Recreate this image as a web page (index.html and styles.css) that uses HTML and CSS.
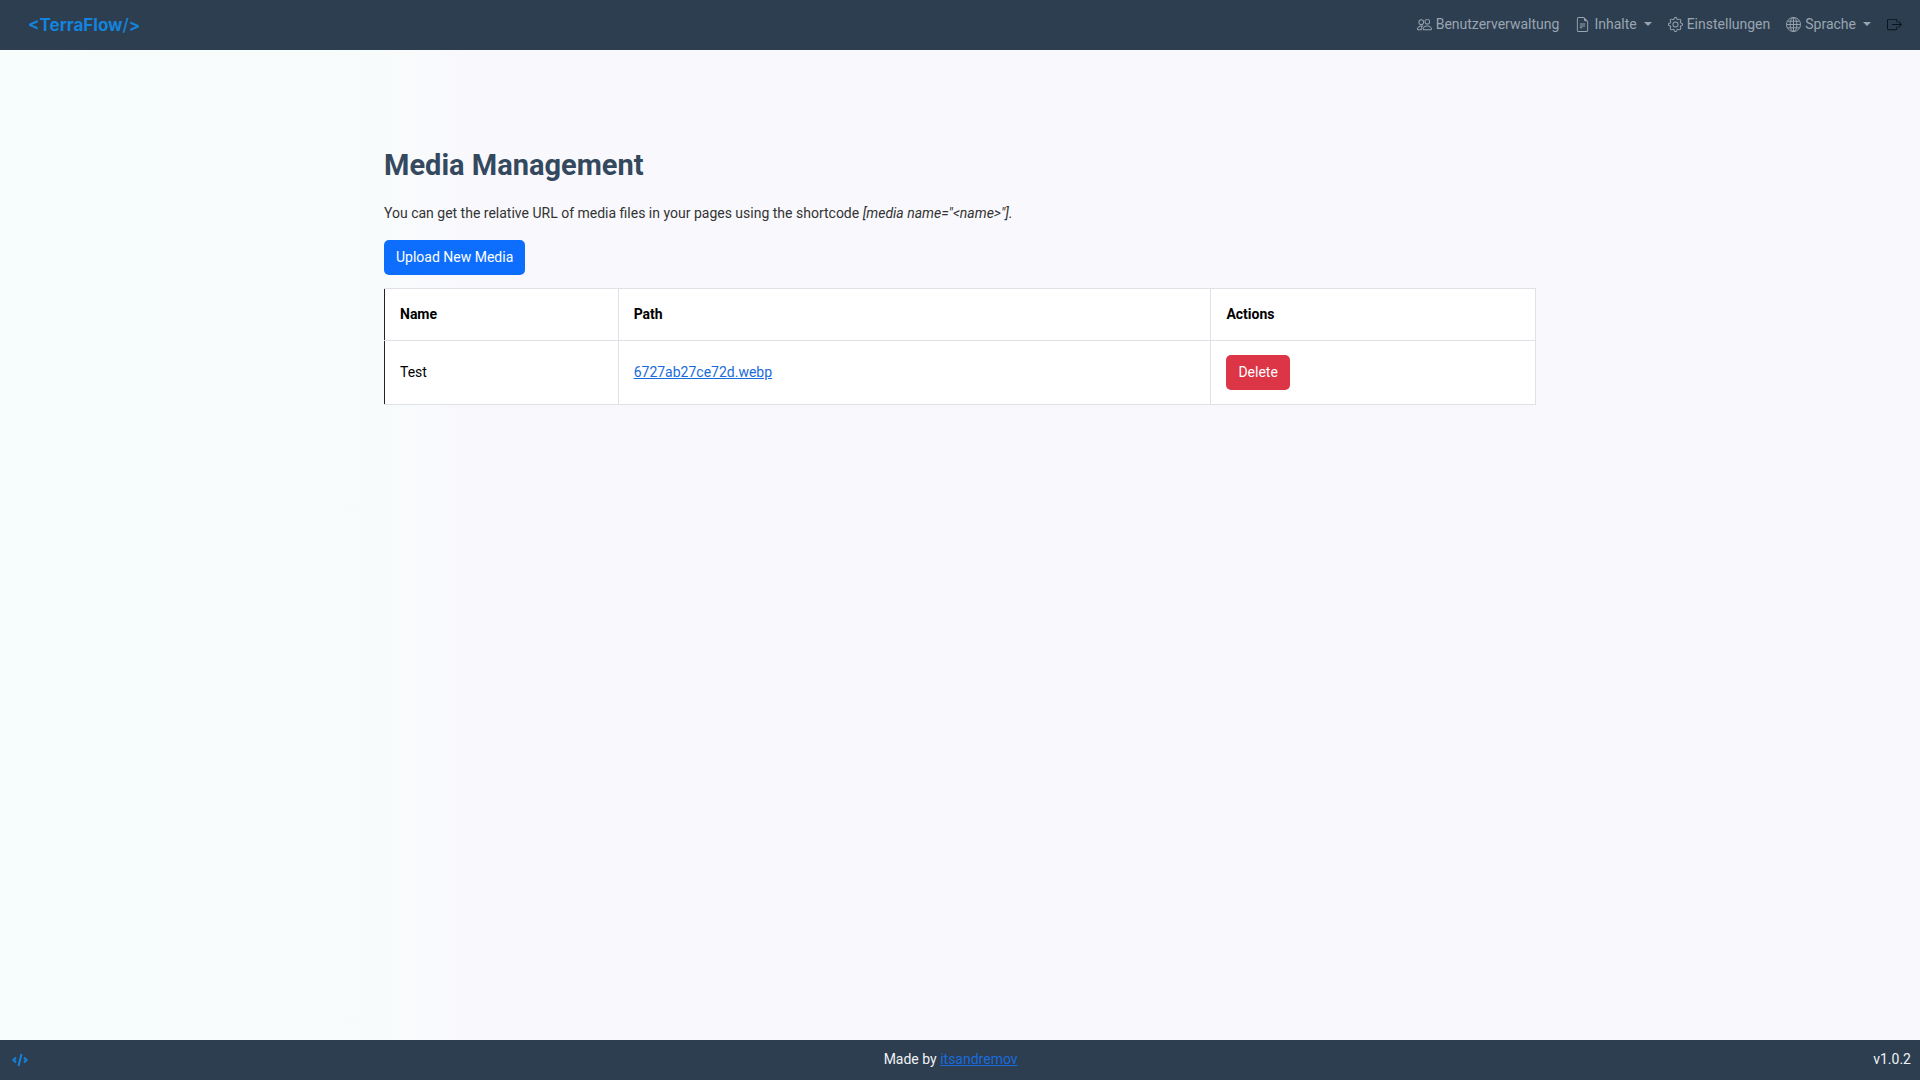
FILE: index.html
```html
<!DOCTYPE html>
<html lang="de">
<head>
<meta charset="utf-8">
<meta name="viewport" content="width=device-width, initial-scale=1">
<title>Media Management</title>
<link rel="stylesheet" href="styles.css">
</head>
<body>
<header class="navbar">
  <a class="brand" href="#">&lt;TerraFlow<span class="brand-slash">/</span>&gt;</a>
  <nav class="nav">
    <a class="nav-link" href="#">
      <svg class="icon" viewBox="0 0 16 16" aria-hidden="true"><path d="M15 14s1 0 1-1-1-4-5-4-5 3-5 4 1 1 1 1zm-7.978-1L7 12.996c.001-.264.167-1.03.76-1.72C8.312 10.629 9.282 10 11 10c1.717 0 2.687.63 3.24 1.276.593.69.758 1.457.76 1.72l-.008.002-.014.002zM11 7a2 2 0 1 0 0-4 2 2 0 0 0 0 4m3-2a3 3 0 1 1-6 0 3 3 0 0 1 6 0M6.936 9.28a6 6 0 0 0-1.23-.247A7 7 0 0 0 5 9c-4 0-5 3-5 4q0 1 1 1h4.216A2.24 2.24 0 0 1 5 13c0-1.01.377-2.042 1.09-2.904.243-.294.526-.569.846-.816M4.92 10A5.5 5.5 0 0 0 4 13H1c0-.26.164-1.03.76-1.724.545-.636 1.492-1.256 3.16-1.275ZM1.5 5.5a3 3 0 1 1 6 0 3 3 0 0 1-6 0m3-2a2 2 0 1 0 0 4 2 2 0 0 0 0-4"/></svg>
      Benutzerverwaltung
    </a>
    <a class="nav-link dropdown" href="#">
      <svg class="icon" viewBox="0 0 16 16" aria-hidden="true"><path d="M5.5 7a.5.5 0 0 0 0 1h5a.5.5 0 0 0 0-1zM5 9.500a.5.5 0 0 1 .5-.5h5a.5.5 0 0 1 0 1h-5a.5.5 0 0 1-.5-.5m0 2a.5.5 0 0 1 .5-.5h2a.5.5 0 0 1 0 1h-2a.5.5 0 0 1-.5-.5"/><path d="M9.500 0H4a2 2 0 0 0-2 2v12a2 2 0 0 0 2 2h8a2 2 0 0 0 2-2V4.500zm0 1v2A1.500 1.500 0 0 0 11 4.500h2V14a1 1 0 0 1-1 1H4a1 1 0 0 1-1-1V2a1 1 0 0 1 1-1z"/></svg>
      Inhalte
    </a>
    <a class="nav-link" href="#">
      <svg class="icon" viewBox="0 0 16 16" aria-hidden="true"><path d="M8 4.754a3.246 3.246 0 1 0 0 6.492 3.246 3.246 0 0 0 0-6.492M5.754 8a2.246 2.246 0 1 1 4.492 0 2.246 2.246 0 0 1-4.492 0"/><path d="M9.796 1.343c-.527-1.790-3.065-1.790-3.592 0l-.094.319a.873.873 0 0 1-1.255.520l-.292-.160c-1.640-.892-3.433.902-2.540 2.541l.159.292a.873.873 0 0 1-.520 1.255l-.319.094c-1.790.527-1.790 3.065 0 3.592l.319.094a.873.873 0 0 1 .520 1.255l-.160.292c-.892 1.640.901 3.434 2.541 2.540l.292-.159a.873.873 0 0 1 1.255.520l.094.319c.527 1.790 3.065 1.790 3.592 0l.094-.319a.873.873 0 0 1 1.255-.520l.292.160c1.640.893 3.434-.902 2.540-2.541l-.159-.292a.873.873 0 0 1 .520-1.255l.319-.094c1.790-.527 1.790-3.065 0-3.592l-.319-.094a.873.873 0 0 1-.520-1.255l.160-.292c.893-1.640-.902-3.433-2.541-2.540l-.292.159a.873.873 0 0 1-1.255-.520zm-2.633.283c.246-.835 1.428-.835 1.674 0l.094.319a1.873 1.873 0 0 0 2.693 1.115l.291-.160c.764-.415 1.600.420 1.184 1.185l-.159.292a1.873 1.873 0 0 0 1.116 2.692l.318.094c.835.246.835 1.428 0 1.674l-.319.094a1.873 1.873 0 0 0-1.115 2.693l.160.291c.415.764-.420 1.600-1.185 1.184l-.291-.159a1.873 1.873 0 0 0-2.693 1.116l-.094.318c-.246.835-1.428.835-1.674 0l-.094-.319a1.873 1.873 0 0 0-2.692-1.115l-.292.160c-.764.415-1.600-.420-1.184-1.185l.159-.291A1.873 1.873 0 0 0 1.945 8.930l-.319-.094c-.835-.246-.835-1.428 0-1.674l.319-.094A1.873 1.873 0 0 0 3.060 4.377l-.160-.292c-.415-.764.420-1.600 1.185-1.184l.292.159a1.873 1.873 0 0 0 2.692-1.115z"/></svg>
      Einstellungen
    </a>
    <a class="nav-link dropdown" href="#">
      <svg class="icon" viewBox="0 0 16 16" aria-hidden="true"><g fill="none" stroke="currentColor"><circle cx="8" cy="8" r="7.500"/><ellipse cx="8" cy="8" rx="3.600" ry="7.500"/><path d="M8 .5v15M.5 8h15M1.700 4.500h12.600M1.700 11.500h12.600"/></g></svg>
      Sprache
    </a>
    <a class="nav-link logout" href="#" aria-label="Abmelden">
      <svg class="icon" viewBox="0 0 16 16" aria-hidden="true"><path d="M10 12.500a.5.5 0 0 1-.5.5h-8a.5.5 0 0 1-.5-.5v-9a.5.5 0 0 1 .5-.5h8a.5.5 0 0 1 .5.5v2a.5.5 0 0 0 1 0v-2A1.500 1.500 0 0 0 9.500 2h-8A1.500 1.500 0 0 0 0 3.500v9A1.500 1.500 0 0 0 1.500 14h8a1.500 1.500 0 0 0 1.500-1.500v-2a.5.5 0 0 0-1 0z"/><path d="M15.854 8.354a.5.5 0 0 0 0-.708l-3-3a.5.5 0 0 0-.708.708L14.293 7.500H5.500a.5.5 0 0 0 0 1h8.793l-2.147 2.146a.5.5 0 0 0 .708.708z"/></svg>
    </a>
  </nav>
</header>
<main class="content">
  <h1 class="title">Media Management</h1>
  <p class="intro">You can get the relative URL of media files in your pages using the shortcode <i>[media name="&lt;name&gt;"].</i></p>
  <button class="btn btn-primary" type="button">Upload New Media</button>
  <table class="table">
    <thead>
      <tr><th class="col-name" scope="col">Name</th><th class="col-path" scope="col">Path</th><th scope="col">Actions</th></tr>
    </thead>
    <tbody>
      <tr>
        <td>Test</td>
        <td><a class="link" href="#">6727ab27ce72d.webp</a></td>
        <td><button class="btn btn-danger" type="button">Delete</button></td>
      </tr>
    </tbody>
  </table>
</main>
<footer class="footer">
  <a class="footer-logo" href="#" aria-label="TerraFlow">
    <svg class="code-icon" viewBox="0 0 16 16" aria-hidden="true"><path d="M4 6.500 1.500 9 4 11.500M12 6.500 14.500 9 12 11.500M9.500 3 6.500 15"/></svg>
  </a>
  <span>Made by <a class="link" href="#">itsandremov</a></span>
  <span>v1.0.2</span>
</footer>
</body>
</html>
```
FILE: styles.css
```css
*, *::before, *::after { box-sizing: border-box; }

body {
  margin: 0;
  min-height: 100vh;
  display: flex;
  flex-direction: column;
  font: 14px/21px Roboto, sans-serif;
  color: #333;
  background: linear-gradient(90deg, #f7fcfc 0%, #f8fbfc 20%, #f9f9fd 24%, #f9f9fd 100%);
}

.navbar {
  display: flex;
  align-items: center;
  justify-content: space-between;
  height: 50px;
  padding: 0 18px 0 28px;
  background: #2c3e50;
}

.brand {
  font: 700 17px/24px Inter, sans-serif;
  color: #1583dc;
  text-decoration: none;
}

.brand-slash { font-weight: 500; }

.nav {
  display: flex;
  gap: 16px;
  padding-bottom: 2px;
}

.nav-link {
  display: flex;
  align-items: center;
  gap: 4px;
  color: #9aa5b0;
  text-decoration: none;
}

.logout { color: #0c151d; }

.icon {
  width: 15px;
  height: 15px;
  fill: currentColor;
}

.dropdown::after {
  content: "";
  margin-left: 3px;
  border: 4px solid transparent;
  border-top-color: currentColor;
  border-bottom: 0;
}

.content {
  flex: 1;
  width: 60%;
  margin: 0 auto;
  padding-top: 98px;
}

.title {
  margin: 0 0 20px;
  font-size: 29px;
  line-height: 35px;
  font-weight: 700;
  color: #34495e;
}

.intro { margin: 0 0 16px; }

.btn {
  display: block;
  padding: 6px 11px;
  border: 1px solid transparent;
  border-radius: 5px;
  font: inherit;
  color: #fff;
  cursor: pointer;
}

.btn-primary { background: #0d6efd; }

.btn-danger { background: #dc3545; }

.table {
  width: 100%;
  margin-top: 13px;
  border-collapse: collapse;
  table-layout: fixed;
  color: #000;
  background: #fff;
}

.table th,
.table td {
  padding: 14px 15px;
  border: 1px solid #dee2e6;
  text-align: left;
  vertical-align: middle;
}

.table th { padding: 15px; }

.table tr > :first-child { border-left: 1px solid #212529; }

.col-name { width: 20.3%; }
.col-path { width: 51.5%; }

.link { color: #1a6bdc; }

.footer {
  display: flex;
  align-items: center;
  justify-content: space-between;
  height: 40px;
  padding: 0 9px 2px 12px;
  color: #f0f3f5;
  background: #2c3e50;
}

.footer-logo { display: flex; }

.code-icon {
  width: 16px;
  height: 16px;
  fill: none;
  stroke: #1583dc;
  stroke-width: 2;
}
```
